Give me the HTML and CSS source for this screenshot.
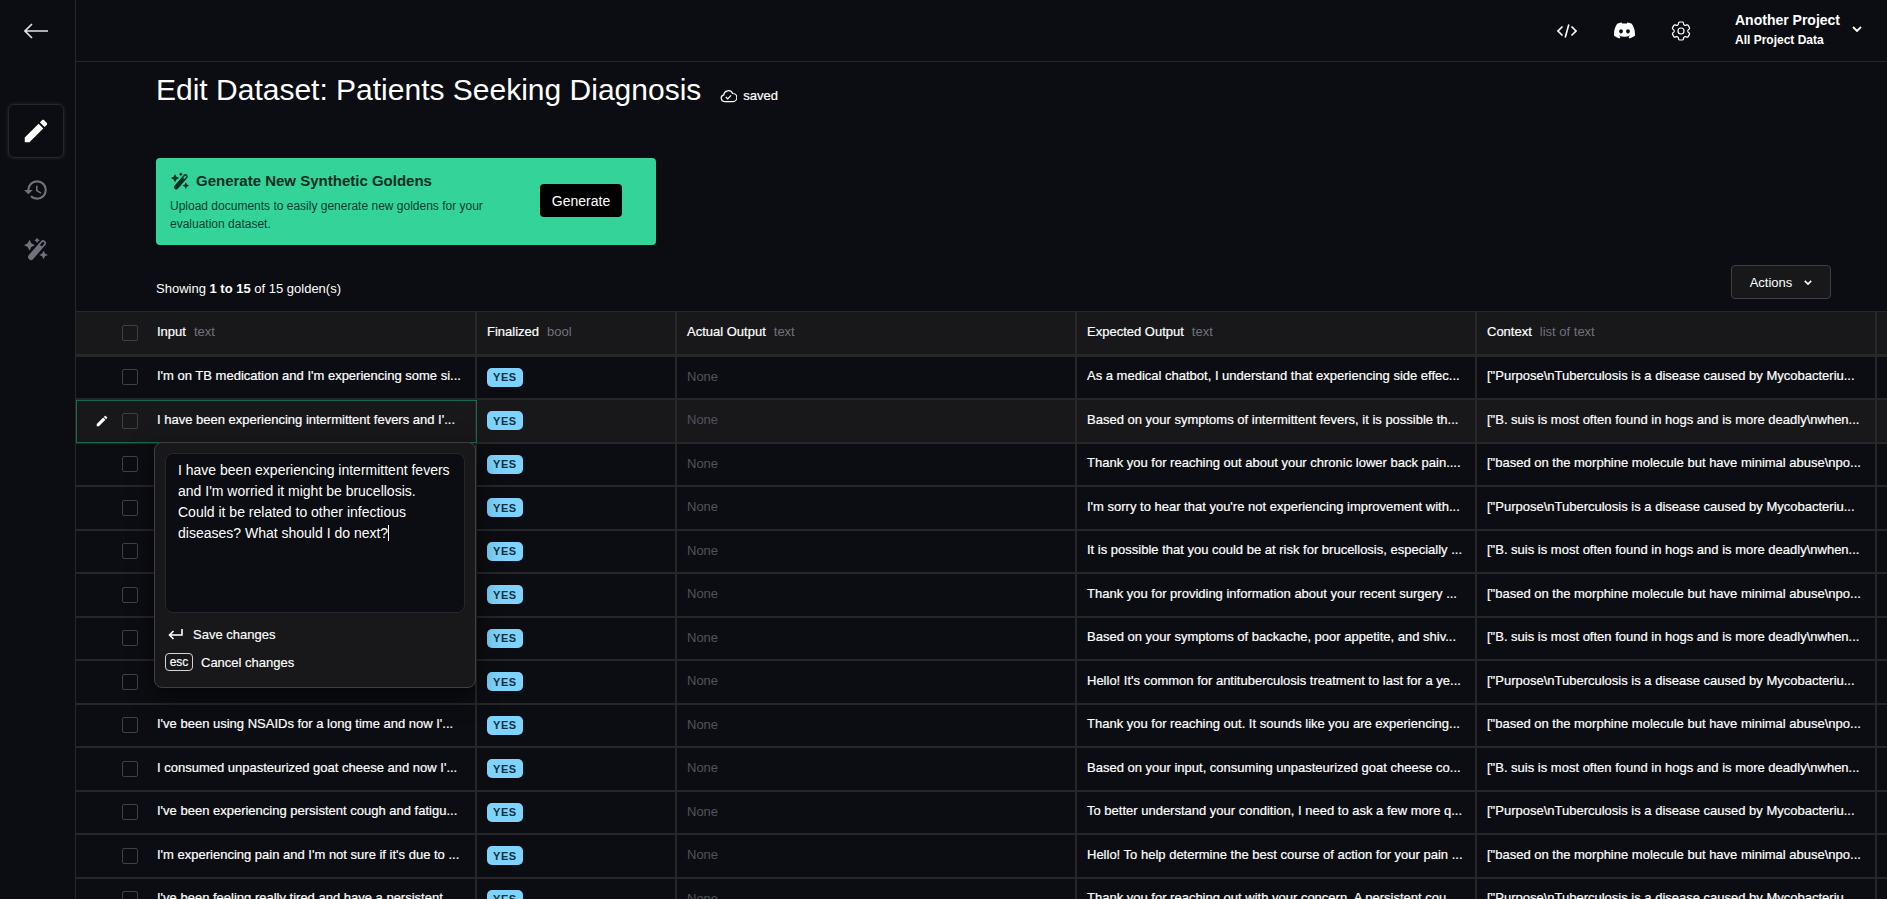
FILE: index.html
```html
<!DOCTYPE html>
<html lang="en">
<head>
    <meta charset="UTF-8">
    <meta name="viewport" content="width=device-width, initial-scale=1.0">
    <title>Edit Dataset</title>
    <link rel="stylesheet" href="styles.css">
</head>
<body>
    <svg class="icon-defs" width="0" height="0">
        <symbol id="i-pencil" viewBox="0 0 24 24">
            <path d="M3 17.25V21h3.75L17.81 9.94l-3.75-3.75L3 17.25zM20.71 7.04c.39-.39.39-1.02 0-1.41l-2.34-2.34c-.39-.39-1.02-.39-1.41 0l-1.83 1.83 3.75 3.75 1.83-1.83z"/>
        </symbol>
        <symbol id="i-wand" viewBox="0 0 24 24">
            <g transform="translate(13 13) rotate(41)">
                <path fill-rule="evenodd" d="M-2.7-8.5a2.7 2.7 0 0 1 5.4 0V8.5a2.7 2.7 0 0 1-5.4 0zM-1.1-8.5a1.1 1.1 0 0 1 2.2 0v3.2h-2.2z"/>
            </g>
            <path d="M6 3.5l1.7 3.3L11 8.5 7.7 10.2 6 13.5 4.3 10.2 1 8.5l3.3-1.7zM13 1.5l.9 1.6 1.6.9-1.6.9-.9 1.6-.9-1.6-1.6-.9 1.6-.9zM19 13.5l1.3 2.7 2.7 1.3-2.7 1.3-1.3 2.7-1.3-2.7-2.7-1.3 2.7-1.3z"/>
        </symbol>
    </svg>

    <div class="app">
        <aside class="sidebar">
            <a class="back-link">
                <svg width="24" height="16" viewBox="0 0 24 16" fill="none" stroke="currentColor" stroke-width="1.6"><path d="M24 8H1M8 1L1 8l7 7"/></svg>
            </a>
            <nav class="side-nav">
                <a class="side-tab active"><svg width="30" height="30" fill="currentColor"><use href="#i-pencil"/></svg></a>
                <a class="side-tab">
                    <svg width="26" height="26" viewBox="0 0 24 24" fill="currentColor"><path d="M13 3a9 9 0 0 0-9 9H1l3.89 3.89.07.14L9 12H6c0-3.87 3.13-7 7-7s7 3.13 7 7-3.13 7-7 7c-1.93 0-3.68-.79-4.94-2.06l-1.42 1.42A8.954 8.954 0 0 0 13 21a9 9 0 0 0 0-18zm-1 5v5l4.28 2.54.72-1.21-3.5-2.08V8H12z"/></svg>
                </a>
                <a class="side-tab"><svg width="26" height="26" fill="currentColor"><use href="#i-wand"/></svg></a>
            </nav>
        </aside>

        <main class="main">
            <header class="topbar">
                <svg class="top-icon code" width="20" height="20" viewBox="0 0 20 20" fill="none" stroke="currentColor" stroke-width="1.6"><path d="M5.5 5.5L1 10l4.5 4.5M14.5 5.5L19 10l-4.5 4.5M11.8 3.5L8.2 16.5"/></svg>
                <svg class="top-icon discord" width="21" height="21" viewBox="0 0 24 24" fill="currentColor"><path d="M20.317 4.37a19.791 19.791 0 0 0-4.885-1.515.074.074 0 0 0-.079.037c-.21.375-.444.864-.608 1.25a18.27 18.27 0 0 0-5.487 0 12.64 12.64 0 0 0-.617-1.25.077.077 0 0 0-.079-.037A19.736 19.736 0 0 0 3.677 4.37a.07.07 0 0 0-.032.027C.533 9.046-.32 13.58.099 18.057a.082.082 0 0 0 .031.057 19.9 19.9 0 0 0 5.993 3.03.078.078 0 0 0 .084-.028 14.09 14.09 0 0 0 1.226-1.994.076.076 0 0 0-.041-.106 13.107 13.107 0 0 1-1.872-.892.077.077 0 0 1-.008-.128 10.2 10.2 0 0 0 .372-.292.074.074 0 0 1 .077-.01c3.928 1.793 8.18 1.793 12.062 0a.074.074 0 0 1 .078.01c.12.098.246.198.373.292a.077.077 0 0 1-.006.127 12.299 12.299 0 0 1-1.873.892.077.077 0 0 0-.041.107c.36.698.772 1.362 1.225 1.993a.076.076 0 0 0 .084.028 19.839 19.839 0 0 0 6.002-3.03.077.077 0 0 0 .032-.054c.5-5.177-.838-9.674-3.549-13.66a.061.061 0 0 0-.031-.03zM8.02 15.33c-1.183 0-2.157-1.085-2.157-2.419 0-1.333.956-2.419 2.157-2.419 1.21 0 2.176 1.096 2.157 2.42 0 1.333-.956 2.418-2.157 2.418zm7.975 0c-1.183 0-2.157-1.085-2.157-2.419 0-1.333.955-2.419 2.157-2.419 1.21 0 2.176 1.096 2.157 2.42 0 1.333-.946 2.418-2.157 2.418z"/></svg>
                <svg class="top-icon gear" width="24" height="24" viewBox="0 0 24 24" fill="none" stroke="currentColor" stroke-width="1.2"><path d="M9.594 3.94c.09-.542.56-.94 1.11-.94h2.593c.55 0 1.02.398 1.11.94l.213 1.281c.063.374.313.686.645.87.074.04.147.083.22.127.325.196.72.257 1.075.124l1.217-.456a1.125 1.125 0 0 1 1.37.49l1.296 2.247a1.125 1.125 0 0 1-.26 1.431l-1.003.827c-.293.241-.438.613-.43.992a7.723 7.723 0 0 1 0 .255c-.008.378.137.75.43.991l1.004.827c.424.35.534.955.26 1.43l-1.298 2.247a1.125 1.125 0 0 1-1.369.491l-1.217-.456c-.355-.133-.75-.072-1.076.124a6.47 6.47 0 0 1-.22.128c-.331.183-.581.495-.644.869l-.213 1.281c-.09.543-.56.94-1.11.94h-2.594c-.55 0-1.019-.398-1.11-.94l-.213-1.281c-.062-.374-.312-.686-.644-.87a6.52 6.52 0 0 1-.22-.127c-.325-.196-.72-.257-1.076-.124l-1.217.456a1.125 1.125 0 0 1-1.369-.49l-1.297-2.247a1.125 1.125 0 0 1 .26-1.431l1.004-.827c.292-.24.437-.613.43-.991a6.932 6.932 0 0 1 0-.255c.007-.38-.138-.751-.43-.992l-1.004-.827a1.125 1.125 0 0 1-.26-1.43l1.297-2.247a1.125 1.125 0 0 1 1.37-.491l1.216.456c.356.133.751.072 1.076-.124.072-.044.146-.086.22-.128.332-.183.582-.495.644-.869l.214-1.28Z"/><path d="M15 12a3 3 0 1 1-6 0 3 3 0 0 1 6 0Z"/></svg>
                <div class="project">
                    <div class="project-name">Another Project</div>
                    <div class="project-scope">All Project Data</div>
                </div>
                <svg class="chevron" width="10" height="6" viewBox="0 0 10 6" fill="none" stroke="currentColor" stroke-width="1.8"><path d="M1 1l4 4 4-4"/></svg>
            </header>

            <section class="content">
                <div class="title-row">
                    <h1>Edit Dataset: Patients Seeking Diagnosis</h1>
                    <span class="saved">
                        <svg width="17" height="14" viewBox="0 0 17 14" fill="none" stroke="currentColor" stroke-width="1.2"><path d="M4.5 12.6a3.4 3.4 0 0 1-.7-6.7 4.6 4.6 0 0 1 8.8-1.4 3.9 3.9 0 0 1 .4 8.1z"/><path d="M5.8 8l1.9 1.9 3.4-3.6"/></svg>
                        saved
                    </span>
                </div>

                <div class="banner">
                    <div class="banner-text">
                        <div class="banner-title">
                            <svg width="20" height="20" fill="currentColor"><use href="#i-wand"/></svg>
                            Generate New Synthetic Goldens
                        </div>
                        <p>Upload documents to easily generate new goldens for your evaluation dataset.</p>
                    </div>
                    <button class="generate-btn">Generate</button>
                </div>

                <div class="toolbar">
                    <div class="showing">Showing <b>1 to 15</b> of 15 golden(s)</div>
                    <button class="actions-btn">
                        Actions
                        <svg width="8" height="5" viewBox="0 0 10 6" fill="none" stroke="currentColor" stroke-width="2"><path d="M1 1l4 4 4-4"/></svg>
                    </button>
                </div>
            </section>

            <div class="table">
                <div class="row head">
                    <div class="cell first">
                        <span class="edit-slot"></span><span class="check"></span>
                        <span class="col-name">Input</span><span class="col-type">text</span>
                    </div>
                    <div class="cell"><span class="col-name">Finalized</span><span class="col-type">bool</span></div>
                    <div class="cell"><span class="col-name">Actual Output</span><span class="col-type">text</span></div>
                    <div class="cell"><span class="col-name">Expected Output</span><span class="col-type">text</span></div>
                    <div class="cell"><span class="col-name">Context</span><span class="col-type">list of text</span></div>
                    <div class="cell"></div>
                </div>

                <div class="row">
                    <div class="cell first"><span class="edit-slot"></span><span class="check"></span><span class="txt">I'm on TB medication and I'm experiencing some si...</span></div>
                    <div class="cell"><span class="badge">YES</span></div>
                    <div class="cell"><span class="none">None</span></div>
                    <div class="cell"><span class="txt">As a medical chatbot, I understand that experiencing side effec...</span></div>
                    <div class="cell"><span class="txt">["Purpose\nTuberculosis is a disease caused by Mycobacteriu...</span></div>
                    <div class="cell"></div>
                </div>

                <div class="row editing">
                    <div class="cell first">
                        <span class="edit-slot"><svg width="14" height="14" fill="currentColor"><use href="#i-pencil"/></svg></span><span class="check"></span>
                        <span class="txt">I have been experiencing intermittent fevers and I'...</span>
                        <div class="popover">
                            <div class="editor">I have been experiencing intermittent fevers and I'm worried it might be brucellosis. Could it be related to other infectious diseases? What should I do next?<span class="caret"></span></div>
                            <div class="hint save-hint">
                                <svg width="15" height="11" viewBox="0 0 15 11" fill="none" stroke="currentColor" stroke-width="1.6"><path d="M14 0v6H1.5M5.5 2L1.5 6l4 4"/></svg>
                                Save changes
                            </div>
                            <div class="hint cancel-hint"><span class="esc">esc</span>Cancel changes</div>
                        </div>
                    </div>
                    <div class="cell"><span class="badge">YES</span></div>
                    <div class="cell"><span class="none">None</span></div>
                    <div class="cell"><span class="txt">Based on your symptoms of intermittent fevers, it is possible th...</span></div>
                    <div class="cell"><span class="txt">["B. suis is most often found in hogs and is more deadly\nwhen...</span></div>
                    <div class="cell"></div>
                </div>

                <div class="row">
                    <div class="cell first"><span class="edit-slot"></span><span class="check"></span></div>
                    <div class="cell"><span class="badge">YES</span></div>
                    <div class="cell"><span class="none">None</span></div>
                    <div class="cell"><span class="txt">Thank you for reaching out about your chronic lower back pain....</span></div>
                    <div class="cell"><span class="txt">["based on the morphine molecule but have minimal abuse\npo...</span></div>
                    <div class="cell"></div>
                </div>

                <div class="row">
                    <div class="cell first"><span class="edit-slot"></span><span class="check"></span></div>
                    <div class="cell"><span class="badge">YES</span></div>
                    <div class="cell"><span class="none">None</span></div>
                    <div class="cell"><span class="txt">I'm sorry to hear that you're not experiencing improvement with...</span></div>
                    <div class="cell"><span class="txt">["Purpose\nTuberculosis is a disease caused by Mycobacteriu...</span></div>
                    <div class="cell"></div>
                </div>

                <div class="row">
                    <div class="cell first"><span class="edit-slot"></span><span class="check"></span></div>
                    <div class="cell"><span class="badge">YES</span></div>
                    <div class="cell"><span class="none">None</span></div>
                    <div class="cell"><span class="txt">It is possible that you could be at risk for brucellosis, especially ...</span></div>
                    <div class="cell"><span class="txt">["B. suis is most often found in hogs and is more deadly\nwhen...</span></div>
                    <div class="cell"></div>
                </div>

                <div class="row">
                    <div class="cell first"><span class="edit-slot"></span><span class="check"></span></div>
                    <div class="cell"><span class="badge">YES</span></div>
                    <div class="cell"><span class="none">None</span></div>
                    <div class="cell"><span class="txt">Thank you for providing information about your recent surgery ...</span></div>
                    <div class="cell"><span class="txt">["based on the morphine molecule but have minimal abuse\npo...</span></div>
                    <div class="cell"></div>
                </div>

                <div class="row">
                    <div class="cell first"><span class="edit-slot"></span><span class="check"></span></div>
                    <div class="cell"><span class="badge">YES</span></div>
                    <div class="cell"><span class="none">None</span></div>
                    <div class="cell"><span class="txt">Based on your symptoms of backache, poor appetite, and shiv...</span></div>
                    <div class="cell"><span class="txt">["B. suis is most often found in hogs and is more deadly\nwhen...</span></div>
                    <div class="cell"></div>
                </div>

                <div class="row">
                    <div class="cell first"><span class="edit-slot"></span><span class="check"></span></div>
                    <div class="cell"><span class="badge">YES</span></div>
                    <div class="cell"><span class="none">None</span></div>
                    <div class="cell"><span class="txt">Hello! It's common for antituberculosis treatment to last for a ye...</span></div>
                    <div class="cell"><span class="txt">["Purpose\nTuberculosis is a disease caused by Mycobacteriu...</span></div>
                    <div class="cell"></div>
                </div>

                <div class="row">
                    <div class="cell first"><span class="edit-slot"></span><span class="check"></span><span class="txt">I've been using NSAIDs for a long time and now I'...</span></div>
                    <div class="cell"><span class="badge">YES</span></div>
                    <div class="cell"><span class="none">None</span></div>
                    <div class="cell"><span class="txt">Thank you for reaching out. It sounds like you are experiencing...</span></div>
                    <div class="cell"><span class="txt">["based on the morphine molecule but have minimal abuse\npo...</span></div>
                    <div class="cell"></div>
                </div>

                <div class="row">
                    <div class="cell first"><span class="edit-slot"></span><span class="check"></span><span class="txt">I consumed unpasteurized goat cheese and now I'...</span></div>
                    <div class="cell"><span class="badge">YES</span></div>
                    <div class="cell"><span class="none">None</span></div>
                    <div class="cell"><span class="txt">Based on your input, consuming unpasteurized goat cheese co...</span></div>
                    <div class="cell"><span class="txt">["B. suis is most often found in hogs and is more deadly\nwhen...</span></div>
                    <div class="cell"></div>
                </div>

                <div class="row">
                    <div class="cell first"><span class="edit-slot"></span><span class="check"></span><span class="txt">I've been experiencing persistent cough and fatigu...</span></div>
                    <div class="cell"><span class="badge">YES</span></div>
                    <div class="cell"><span class="none">None</span></div>
                    <div class="cell"><span class="txt">To better understand your condition, I need to ask a few more q...</span></div>
                    <div class="cell"><span class="txt">["Purpose\nTuberculosis is a disease caused by Mycobacteriu...</span></div>
                    <div class="cell"></div>
                </div>

                <div class="row">
                    <div class="cell first"><span class="edit-slot"></span><span class="check"></span><span class="txt">I'm experiencing pain and I'm not sure if it's due to ...</span></div>
                    <div class="cell"><span class="badge">YES</span></div>
                    <div class="cell"><span class="none">None</span></div>
                    <div class="cell"><span class="txt">Hello! To help determine the best course of action for your pain ...</span></div>
                    <div class="cell"><span class="txt">["based on the morphine molecule but have minimal abuse\npo...</span></div>
                    <div class="cell"></div>
                </div>

                <div class="row">
                    <div class="cell first"><span class="edit-slot"></span><span class="check"></span><span class="txt">I've been feeling really tired and have a persistent...</span></div>
                    <div class="cell"><span class="badge">YES</span></div>
                    <div class="cell"><span class="none">None</span></div>
                    <div class="cell"><span class="txt">Thank you for reaching out with your concern. A persistent cou...</span></div>
                    <div class="cell"><span class="txt">["Purpose\nTuberculosis is a disease caused by Mycobacteriu...</span></div>
                    <div class="cell"></div>
                </div>
            </div>
        </main>
    </div>
</body>
</html>
```

FILE: styles.css
```css
* {
    box-sizing: border-box;
}

html, body {
    height: 100%;
}

body {
    margin: 0;
    background: #0c0d12;
    color: #fff;
    font-family: 'Liberation Sans', Arial, sans-serif;
    font-size: 13px;
    overflow: hidden;
}

.icon-defs {
    position: absolute;
}

.app {
    display: flex;
    height: 100vh;
}

/* left rail */
.sidebar {
    width: 76px;
    flex-shrink: 0;
    padding-right: 4px;
    border-right: 1px solid #27272a;
    display: flex;
    flex-direction: column;
    align-items: center;
}

.back-link {
    height: 104px;
    padding-top: 23px;
    color: #e4e4e7;
    line-height: 0;
}

.side-nav {
    display: flex;
    flex-direction: column;
    gap: 5px;
}

.side-tab {
    width: 56px;
    height: 54px;
    display: flex;
    align-items: center;
    justify-content: center;
    border: 1px solid transparent;
    border-radius: 6px;
    color: #71717a;
}

.side-tab.active {
    color: #fff;
    border-color: #27272a;
    box-shadow: 0 0 4px rgba(255, 255, 255, 0.12);
}

/* top bar */
.main {
    flex: 1;
    min-width: 0;
    overflow: hidden;
}

.topbar {
    height: 62px;
    border-bottom: 1px solid #27272a;
    display: flex;
    align-items: center;
    padding-right: 25px;
}

.top-icon {
    flex-shrink: 0;
}

.code {
    margin-left: auto;
}

.discord {
    margin-left: 37px;
}

.gear {
    margin-left: 34px;
}

.project {
    margin-left: 42px;
    width: 117px;
    padding-bottom: 2px;
    font-weight: bold;
}

.project-name {
    font-size: 14px;
    line-height: 18px;
}

.project-scope {
    font-size: 12px;
    line-height: 18px;
    margin-top: 2px;
}

.chevron {
    flex-shrink: 0;
    margin-bottom: 3px;
}

/* page head */
.content {
    padding: 10px 56px 12px 80px;
}

.title-row {
    display: flex;
    align-items: flex-end;
    gap: 19px;
}

h1 {
    margin: 0;
    font-size: 30px;
    line-height: 36px;
    font-weight: 400;
}

.saved {
    display: flex;
    align-items: center;
    gap: 6px;
    font-size: 13px;
    line-height: 20px;
    padding-bottom: 2px;
    -webkit-text-stroke: 0.2px;
}

.banner {
    width: 500px;
    height: 87px;
    margin-top: 50px;
    padding: 0 34px 0 14px;
    background: #34d399;
    border-radius: 4px;
    color: #052e22;
    display: flex;
    align-items: center;
    justify-content: space-between;
}

.banner-text {
    width: 330px;
}

.banner-title {
    display: flex;
    align-items: center;
    gap: 6px;
    font-size: 15px;
    font-weight: bold;
    line-height: 20px;
}

.banner-text p {
    margin: 6px 0 0;
    font-size: 12px;
    line-height: 18px;
    color: #053f30;
}

.generate-btn {
    width: 82px;
    height: 33px;
    margin-top: -2px;
    background: #000;
    color: #fff;
    border: none;
    border-radius: 4px;
    font: inherit;
    font-size: 14px;
}

.toolbar {
    display: flex;
    justify-content: space-between;
    align-items: flex-end;
    margin-top: 20px;
}

.showing {
    line-height: 20px;
}

.actions-btn {
    width: 100px;
    height: 34px;
    display: flex;
    align-items: center;
    justify-content: center;
    gap: 12px;
    background: #18181b;
    color: #fff;
    border: 1px solid #3f3f46;
    border-radius: 4px;
    font: inherit;
}

/* grid table */
.table {
    width: 2300px;
    border-top: 1px solid #27272a;
}

.row {
    display: grid;
    grid-template-columns: 401px 200px 400px 400px 400px 400px;
    height: 43.5px;
    border-bottom: 2px solid #27272a;
}

.row.head {
    height: 44.5px;
    background: #18181b;
    border-bottom-width: 3px;
}

.row.editing {
    background: #18181b;
    position: relative;
    z-index: 2;
}

.cell {
    display: flex;
    align-items: center;
    min-width: 0;
    padding: 0 4px 0 10px;
    border-right: 2px solid #27272a;
}

.cell.first {
    padding-left: 19px;
    position: relative;
}

.editing .cell.first {
    outline: 1px solid #166a4e;
    outline-offset: -1px;
    margin-bottom: -1px;
}

.edit-slot {
    width: 14px;
    height: 14px;
    margin-right: 13px;
    flex-shrink: 0;
    line-height: 0;
}

.check {
    width: 16px;
    height: 16px;
    margin-right: 19px;
    flex-shrink: 0;
    border: 1.5px solid #3f3f46;
    border-radius: 2px;
}

.col-name,
.col-type,
.none {
    margin-bottom: 2px;
}

.txt {
    margin-bottom: 3px;
}

.col-name {
    -webkit-text-stroke: 0.2px;
}

.col-type {
    margin-left: 8px;
    color: #71717a;
}

.txt {
    min-width: 0;
    white-space: nowrap;
    -webkit-text-stroke: 0.2px;
}

.none {
    color: #52525b;
}

.badge {
    padding: 0 6px;
    height: 19px;
    display: flex;
    align-items: center;
    background: #7dd3fc;
    color: #12303f;
    border-radius: 5px;
    font-size: 11px;
    font-weight: bold;
    letter-spacing: 0.6px;
}

/* cell editor */
.popover {
    position: absolute;
    top: 42px;
    left: 78px;
    width: 322px;
    height: 246px;
    padding: 10px;
    background: #18181b;
    border: 1px solid #3f3f46;
    border-radius: 8px;
    box-shadow: 0 8px 24px rgba(0, 0, 0, 0.6);
}

.editor {
    height: 160px;
    padding: 6px 12px;
    background: #0c0d12;
    border: 1px solid #27272a;
    border-radius: 8px;
    font-size: 14px;
    line-height: 21px;
}

.caret {
    border-left: 1px solid #fff;
}

.hint {
    display: flex;
    align-items: center;
    height: 18px;
    -webkit-text-stroke: 0.15px;
}

.save-hint {
    margin-top: 12px;
    padding-left: 3px;
    gap: 10px;
}

.cancel-hint {
    margin-top: 10px;
    gap: 8px;
}

.esc {
    width: 28px;
    height: 18px;
    display: flex;
    align-items: center;
    justify-content: center;
    border: 1px solid #d4d4d8;
    border-radius: 4px;
    font-size: 12px;
}
```
